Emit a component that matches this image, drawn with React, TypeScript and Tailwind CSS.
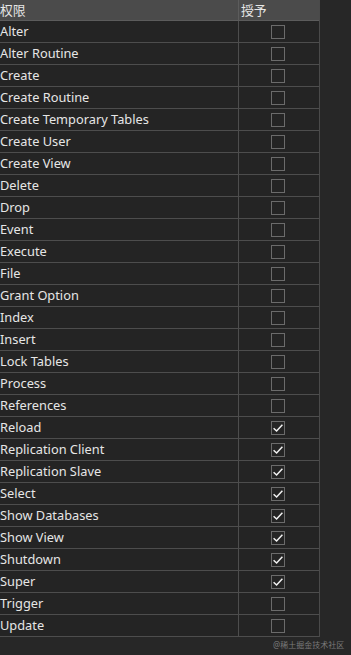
import React from "react";

const perms: [string, boolean][] = [
  ["Alter", false],
  ["Alter Routine", false],
  ["Create", false],
  ["Create Routine", false],
  ["Create Temporary Tables", false],
  ["Create User", false],
  ["Create View", false],
  ["Delete", false],
  ["Drop", false],
  ["Event", false],
  ["Execute", false],
  ["File", false],
  ["Grant Option", false],
  ["Index", false],
  ["Insert", false],
  ["Lock Tables", false],
  ["Process", false],
  ["References", false],
  ["Reload", true],
  ["Replication Client", true],
  ["Replication Slave", true],
  ["Select", true],
  ["Show Databases", true],
  ["Show View", true],
  ["Shutdown", true],
  ["Super", true],
  ["Trigger", false],
  ["Update", false],
];

function Box({ on }: { on: boolean }) {
  return (
    <div className="w-[14px] h-[14px] border border-[#6b6b6b] flex items-center justify-center">
      {on && (
        <svg width="12" height="12" viewBox="0 0 12 12">
          <path d="M1.6 6.2 L4.6 9 L10.4 2.8" fill="none" stroke="#f2f2f2" strokeWidth="1.5" />
        </svg>
      )}
    </div>
  );
}

export default function App() {
  return (
    <div
      className="w-[351px] h-[655px] bg-[#272727] text-[#e6e6e6] text-[12.8px] relative overflow-hidden"
      style={{ fontFamily: '"Noto Sans", "Noto Sans CJK SC", sans-serif' }}
    >
      <div className="w-[320px] border-r border-[#4a4a4a]">
        <div className="flex h-[21px] bg-[#4b4b4b] border-b border-[#5c5c5c] leading-[20px]">
          <div className="w-[239px] border-r border-[#5c5c5c]">权限</div>
          <div className="flex-1 pl-[2px]">授予</div>
        </div>
        {perms.map(([name, on]) => (
          <div key={name} className="flex h-[22px] border-b border-[#4d4d4d] bg-[#242424]">
            <div className="w-[239px] border-r border-[#4d4d4d] leading-[21px]">{name}</div>
            <div className="flex-1 flex items-center justify-center pr-[2px]">
              <Box on={on} />
            </div>
          </div>
        ))}
      </div>
      <div className="absolute left-[273px] top-[640px] text-[8px] leading-[10px] text-[#7a7a7a]">@稀土掘金技术社区</div>
    </div>
  );
}
